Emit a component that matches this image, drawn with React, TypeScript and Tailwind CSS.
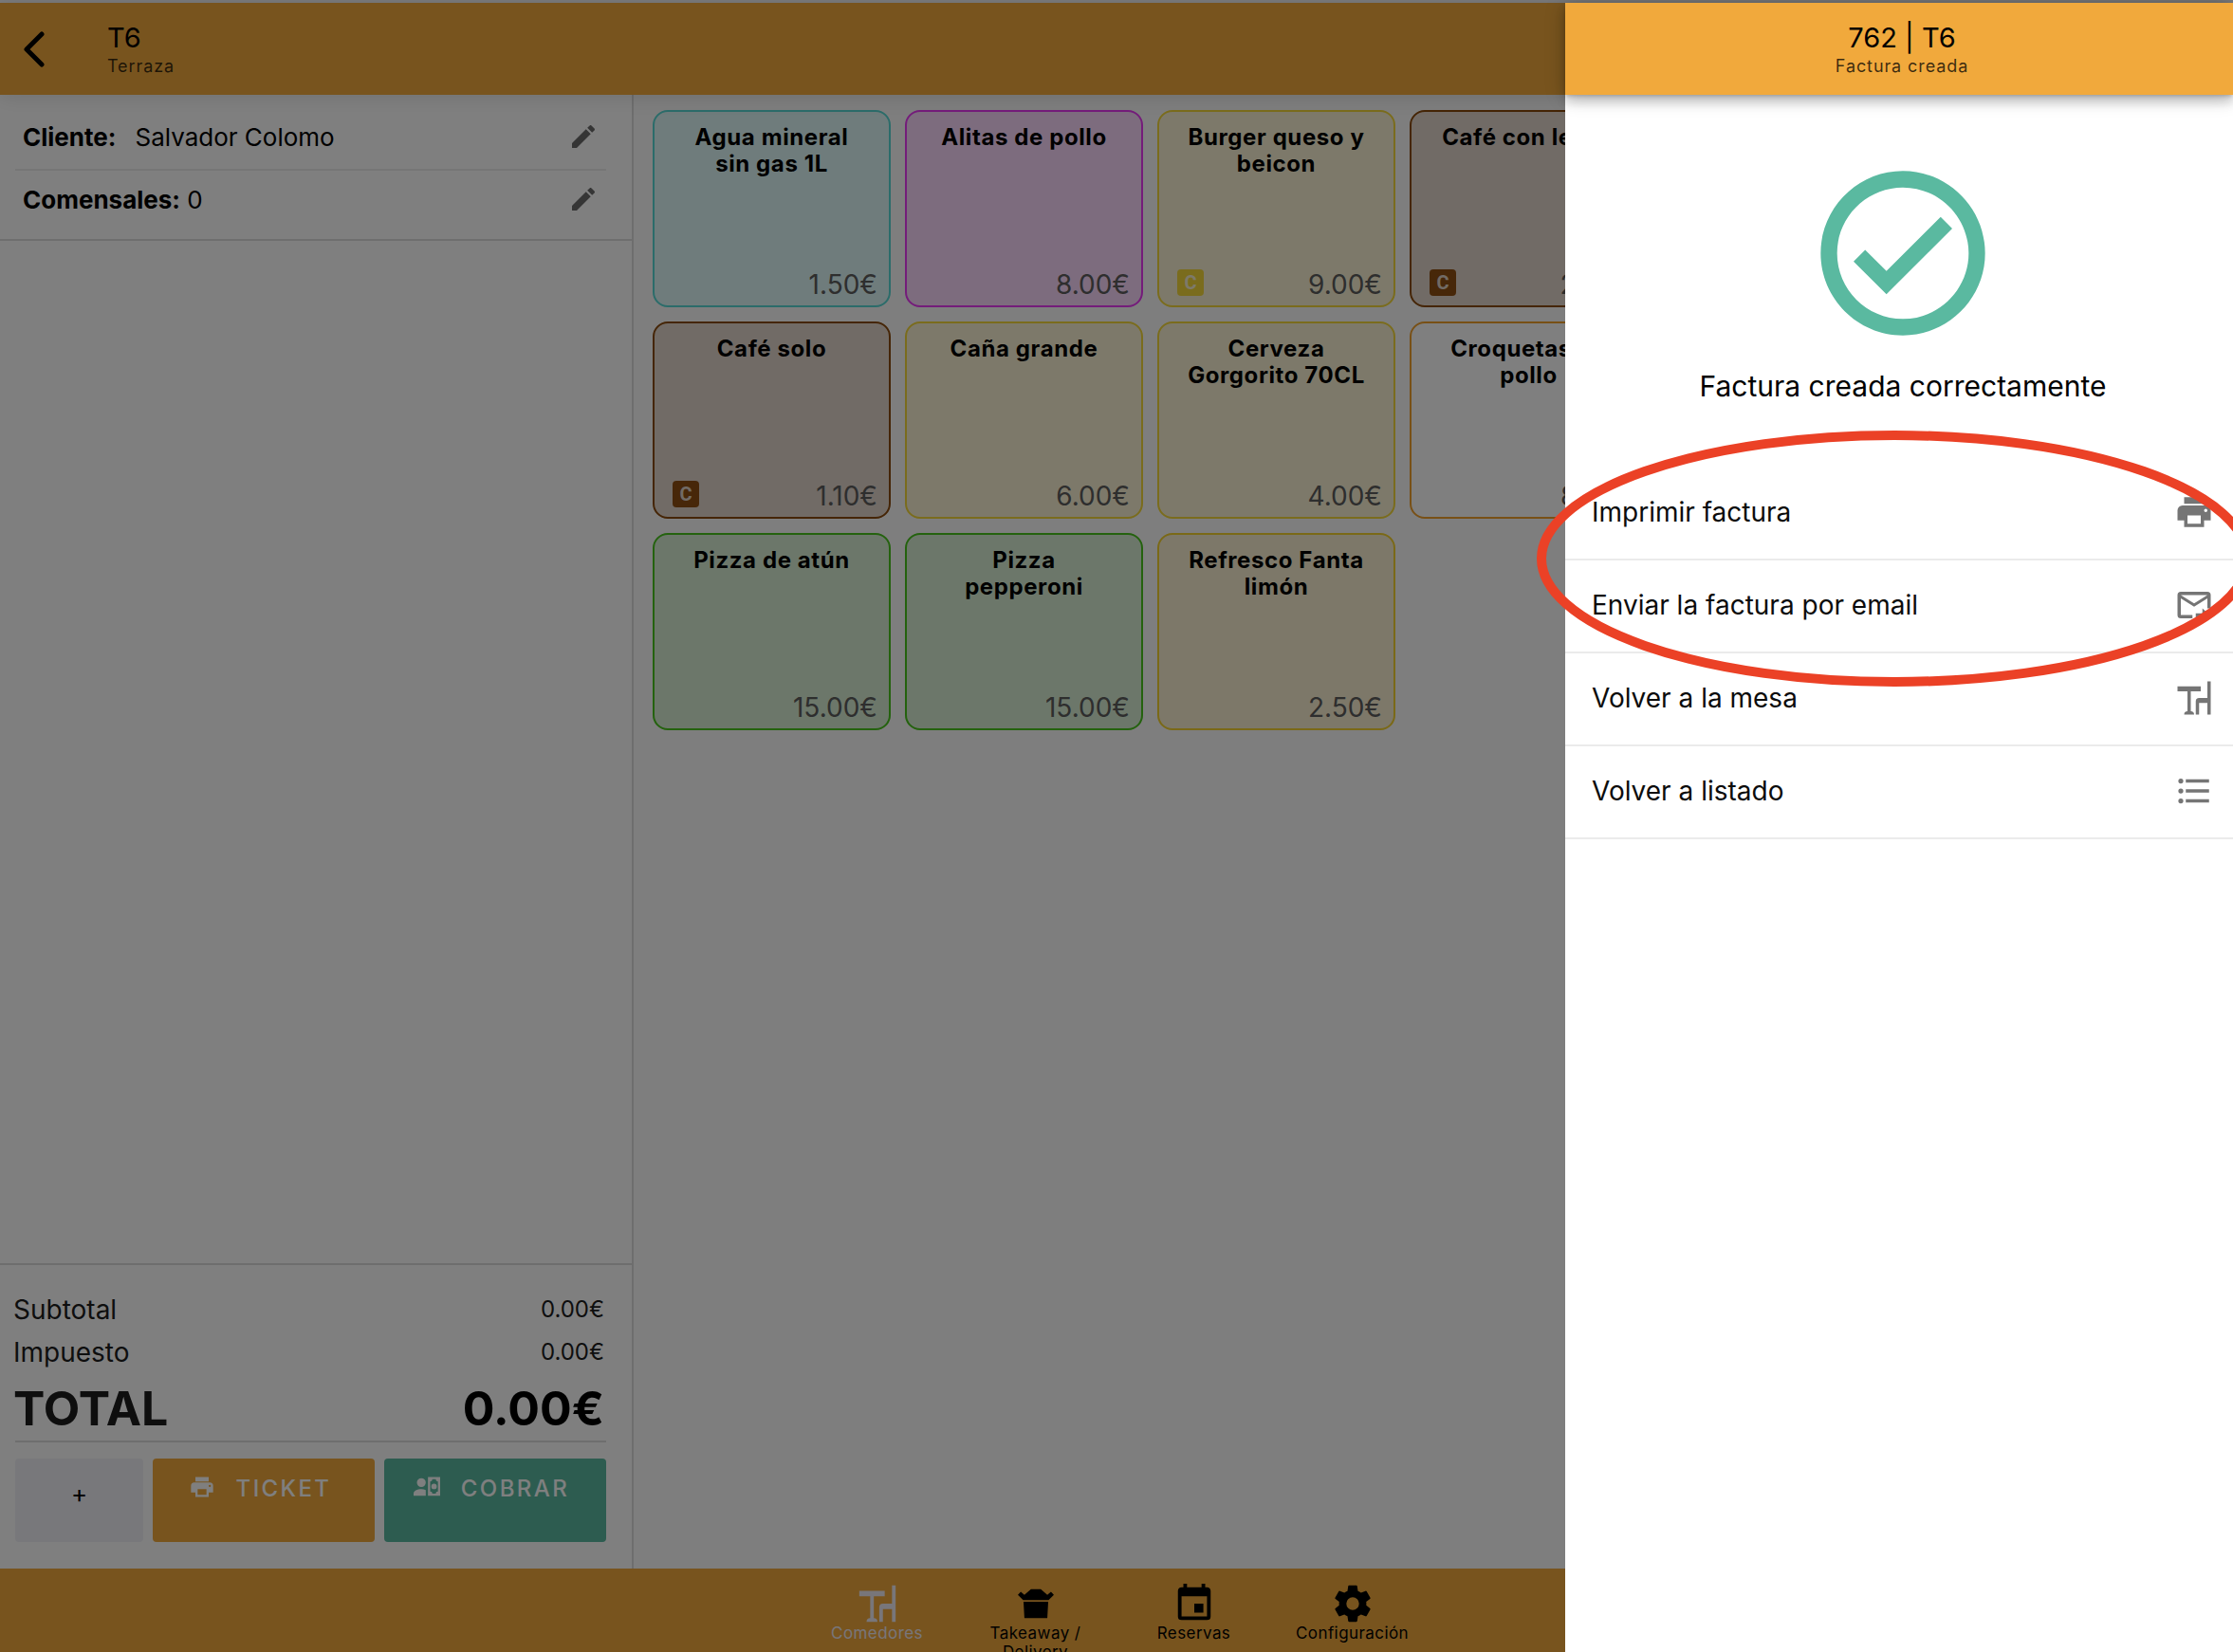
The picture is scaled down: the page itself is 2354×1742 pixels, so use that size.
import React from "react";

const icons = {
  printer:
    "M18,3H6V7H18M19,12A1,1 0 0,1 18,11A1,1 0 0,1 19,10A1,1 0 0,1 20,11A1,1 0 0,1 19,12M16,19H8V14H16M19,8H5A3,3 0 0,0 2,11V17H6V21H18V17H22V11A3,3 0 0,0 19,8Z",
  emailSend:
    "M13 17H17V14L22 18.5L17 23V20H13V17M20 4A2 2 0 0 1 22 6V14H20V8L12 13L4 8V18H11V20H4A2 2 0 0 1 2 18V6A2 2 0 0 1 4 4H20M12 11L20 6H4L12 11Z",
  tableChair:
    "M12 22H6A2 2 0 0 1 8 20V8H2V5H16V8H10V20A2 2 0 0 1 12 22M22 2V22H20V15H15V22H13V14A2 2 0 0 1 15 12H20V2Z",
  list: "M7,5H21V7H7V5M7,13V11H21V13H7M4,4.5A1.5,1.5 0 0,1 5.5,6A1.5,1.5 0 0,1 4,7.5A1.5,1.5 0 0,1 2.5,6A1.5,1.5 0 0,1 4,4.5M4,10.5A1.5,1.5 0 0,1 5.5,12A1.5,1.5 0 0,1 4,13.5A1.5,1.5 0 0,1 2.5,12A1.5,1.5 0 0,1 4,10.5M7,19V17H21V19H7M4,16.5A1.5,1.5 0 0,1 5.5,18A1.5,1.5 0 0,1 4,19.5A1.5,1.5 0 0,1 2.5,18A1.5,1.5 0 0,1 4,16.5Z",
  pencil:
    "M20.71,7.04C21.1,6.65 21.1,6 20.71,5.63L18.37,3.29C18,2.9 17.35,2.9 16.96,3.29L15.12,5.12L18.87,8.87M3,17.25V21H6.75L17.81,9.93L14.06,6.18L3,17.25Z",
  checkCircle:
    "M12 2C6.5 2 2 6.5 2 12S6.5 22 12 22 22 17.5 22 12 17.5 2 12 2M12 20C7.59 20 4 16.41 4 12S7.59 4 12 4 20 7.59 20 12 16.41 20 12 20M16.59 7.58L10 14.17L7.41 11.59L6 13L10 17L18 9L16.59 7.58Z",
  accountCash:
    "M11 8A4 4 0 1 1 3 8A4 4 0 1 1 11 8M11 14.72V20H0V18C0 15.79 3.13 14 7 14C8.5 14 9.87 14.27 11 14.72M24 20H13V3H24V20M16 11.5A2.5 2.5 0 1 0 21 11.5A2.5 2.5 0 1 0 16 11.5M22 7A2 2 0 0 1 20 5H17A2 2 0 0 1 15 7V16A2 2 0 0 1 17 18H20A2 2 0 0 1 22 16V7Z",
  takeaway:
    "M9.3 4H14.7L18.3 7.2L20.3 5.5L21.9 7.2L19 10H5L2.1 7.2L3.7 5.5L5.7 7.2ZM5.2 11H18.8L18.3 20H5.7Z",
  calendar:
    "M19,19H5V8H19M16,1V3H8V1H6V3H5C3.89,3 3,3.89 3,5V19A2,2 0 0,0 5,21H19A2,2 0 0,0 21,19V5C21,3.89 20.1,3 19,3H18V1M17,12H12V17H17V12Z",
  cog: "M12,15.5A3.5,3.5 0 0,1 8.5,12A3.5,3.5 0 0,1 12,8.5A3.5,3.5 0 0,1 15.5,12A3.5,3.5 0 0,1 12,15.5M19.43,12.97C19.47,12.65 19.5,12.33 19.5,12C19.5,11.67 19.47,11.34 19.43,11L21.54,9.37C21.73,9.22 21.78,8.95 21.66,8.73L19.66,5.27C19.54,5.05 19.27,4.96 19.05,5.05L16.56,6.05C16.04,5.66 15.5,5.32 14.87,5.07L14.5,2.42C14.46,2.18 14.25,2 14,2H10C9.75,2 9.54,2.18 9.5,2.42L9.13,5.07C8.5,5.32 7.96,5.66 7.44,6.05L4.95,5.05C4.73,4.96 4.46,5.05 4.34,5.27L2.34,8.73C2.21,8.95 2.27,9.22 2.46,9.37L4.57,11C4.53,11.34 4.5,11.67 4.5,12C4.5,12.33 4.53,12.65 4.57,12.97L2.46,14.63C2.27,14.78 2.21,15.05 2.34,15.27L4.34,18.73C4.46,18.95 4.73,19.03 4.95,18.95L7.44,17.94C7.96,18.34 8.5,18.68 9.13,18.93L9.5,21.58C9.54,21.82 9.75,22 10,22H14C14.25,22 14.46,21.82 14.5,21.58L14.87,18.93C15.5,18.67 16.04,18.34 16.56,17.94L19.05,18.95C19.27,19.03 19.54,18.95 19.66,18.73L21.66,15.27C21.78,15.05 21.73,14.78 21.54,14.63L19.43,12.97Z",
};

type IconName = keyof typeof icons;

function Icon({ name, className }: { name: IconName; className: string }) {
  return (
    <svg viewBox="0 0 24 24" className={`shrink-0 ${className}`} fill="currentColor" fillRule="evenodd" aria-hidden="true">
      <path d={icons[name]} />
    </svg>
  );
}

const tones = {
  cyan: { card: "border-[#57d9d4] bg-[#def8f8]", badge: "bg-[#57d9d4] text-[#def8f8]" },
  magenta: { card: "border-[#e838f5] bg-[#fbd8fd]", badge: "bg-[#e838f5] text-[#fbd8fd]" },
  yellow: { card: "border-[#f5d93a] bg-[#fbf3d4]", badge: "bg-[#f5d93a] text-[#fbf3d4]" },
  amber: { card: "border-[#f5d22e] bg-[#fbf0d2]", badge: "bg-[#f5d22e] text-[#fbf0d2]" },
  brown: { card: "border-[#8b4a0c] bg-[#e3d6cc]", badge: "bg-[#8f4f12] text-[#e3d6cc]" },
  green: { card: "border-[#48c41c] bg-[#d9efd5]", badge: "bg-[#48c41c] text-[#d9efd5]" },
  orange: { card: "border-[#f1a02c] bg-white", badge: "bg-[#f1a02c] text-white" },
};

const products: { name: string; price: string; tone: keyof typeof tones; combo?: boolean }[] = [
  { name: "Agua mineral sin gas 1L", price: "1.50€", tone: "cyan" },
  { name: "Alitas de pollo", price: "8.00€", tone: "magenta" },
  { name: "Burger queso y beicon", price: "9.00€", tone: "yellow", combo: true },
  { name: "Café con leche", price: "2.00€", tone: "brown", combo: true },
  { name: "Café solo", price: "1.10€", tone: "brown", combo: true },
  { name: "Caña grande", price: "6.00€", tone: "yellow" },
  { name: "Cerveza Gorgorito 70CL", price: "4.00€", tone: "yellow" },
  { name: "Croquetas de pollo", price: "8.00€", tone: "orange" },
  { name: "Pizza de atún", price: "15.00€", tone: "green" },
  { name: "Pizza pepperoni", price: "15.00€", tone: "green" },
  { name: "Refresco Fanta limón", price: "2.50€", tone: "amber" },
];

const tabs: { label: string; icon: IconName; active?: boolean }[] = [
  { label: "Comedores", icon: "tableChair", active: true },
  { label: "Takeaway / Delivery", icon: "takeaway" },
  { label: "Reservas", icon: "calendar" },
  { label: "Configuración", icon: "cog" },
];

const actions: { label: string; icon: IconName }[] = [
  { label: "Imprimir factura", icon: "printer" },
  { label: "Enviar la factura por email", icon: "emailSend" },
  { label: "Volver a la mesa", icon: "tableChair" },
  { label: "Volver a listado", icon: "list" },
];

function Heading({ title, subtitle }: { title: string; subtitle: string }) {
  return (
    <div>
      <h1 className="text-[29px] leading-9">{title}</h1>
      <p className="text-lg leading-6 tracking-wider text-black/75">{subtitle}</p>
    </div>
  );
}

function OrderPanel() {
  return (
    <section className="flex w-[668px] shrink-0 flex-col border-r-2 border-[#dcdcdc] bg-white">
      <div className="border-b-2 border-[#dcdcdc] pr-[27px] pb-2 pl-4">
        <div className="flex h-20 items-center justify-between border-b-2 border-[#ececec] pt-2.5 pr-2 pl-2 text-[26px]">
          <p>
            <b className="mr-5 font-bold">Cliente:</b>
            <span>Salvador Colomo</span>
          </p>
          <button type="button" aria-label="Editar cliente" className="text-[#6b6b6b]">
            <Icon name="pencil" className="size-8" />
          </button>
        </div>
        <div className="flex h-16 items-center justify-between pr-2 pb-1 pl-2 text-[26px]">
          <p>
            <b className="font-bold">Comensales:</b> <span>0</span>
          </p>
          <button type="button" aria-label="Editar comensales" className="text-[#6b6b6b]">
            <Icon name="pencil" className="size-8" />
          </button>
        </div>
      </div>
      <div className="flex-1" />
      <div className="border-t-2 border-[#dcdcdc] pt-6 pr-[27px] pb-7 pl-4">
        <dl className="-ml-0.5 text-[#1c1c1c]">
          <div className="flex h-[45px] items-center justify-between">
            <dt className="text-[28px]">Subtotal</dt>
            <dd className="pr-0.5 text-2xl">0.00€</dd>
          </div>
          <div className="flex h-[45px] items-center justify-between">
            <dt className="text-[28px]">Impuesto</dt>
            <dd className="pr-0.5 text-2xl">0.00€</dd>
          </div>
          <div className="flex h-[71px] items-center justify-between pt-1 text-[50px] font-bold">
            <dt>TOTAL</dt>
            <dd className="pr-0.5 text-black">0.00€</dd>
          </div>
        </dl>
        <div className="grid grid-cols-[135px_1fr_1fr] gap-[10px] border-t-2 border-[#dcdcdc] pt-[17px]">
          <button type="button" className="h-[88px] rounded bg-[#f0f1f6] pb-4 text-[26px] text-black">
            +
          </button>
          <button
            type="button"
            className="flex h-[88px] items-start justify-center gap-[22px] rounded bg-[#f1a93c] pt-4 pr-2 text-2xl font-medium tracking-widest text-white"
          >
            <Icon name="printer" className="size-7" />
            <span className="leading-8">TICKET</span>
          </button>
          <button
            type="button"
            className="flex h-[88px] items-start justify-center gap-[22px] rounded bg-[#5ab9a0] pt-4 pr-2 text-2xl font-medium tracking-widest text-white"
          >
            <Icon name="accountCash" className="size-7" />
            <span className="leading-8">COBRAR</span>
          </button>
        </div>
      </div>
    </section>
  );
}

function ProductGrid() {
  return (
    <section className="flex-1 bg-[#fcfcfc] pt-4 pl-5">
      <div className="grid grid-cols-[repeat(4,251px)] gap-[15px]">
        {products.map((p) => (
          <button
            type="button"
            key={p.name}
            className={`flex h-52 flex-col rounded-2xl border-2 pt-[13px] pr-3 pb-1.5 pl-[19px] ${tones[p.tone].card}`}
          >
            <span className="mr-4 ml-[9px] self-stretch text-center text-2xl leading-7 font-bold tracking-wide">
              {p.name}
            </span>
            <span className="mt-auto flex items-start justify-between self-stretch">
              {p.combo ? (
                <span
                  className={`flex size-7 items-center justify-center rounded-sm font-[Roboto] text-xl font-bold ${tones[p.tone].badge}`}
                >
                  C
                </span>
              ) : (
                <span />
              )}
              <span className="text-[28px] leading-8 text-[#5c5c5c]">{p.price}</span>
            </span>
          </button>
        ))}
      </div>
    </section>
  );
}

function InvoiceDrawer() {
  return (
    <aside
      role="dialog"
      aria-label="Factura creada"
      className="absolute top-[3px] right-0 bottom-0 w-[704px] bg-white"
    >
      <header className="flex h-[97px] items-center justify-center bg-[#f1a93c] pl-1.5 text-center shadow-[0_2px_4px_-1px_rgba(0,0,0,0.2),0_8px_10px_rgba(0,0,0,0.14),0_2px_20px_rgba(0,0,0,0.24)]">
        <Heading title="762 | T6" subtitle="Factura creada" />
      </header>
      <div className="flex flex-col items-center pt-[63px] pl-2">
        <Icon name="checkCircle" className="size-52 text-[#5ab9a0]" />
        <p className="pt-4 text-[30px] leading-10">Factura creada correctamente</p>
      </div>
      <ul className="pt-[66px]">
        {actions.map((a) => (
          <li key={a.label}>
            <button
              type="button"
              className="flex h-[98px] w-full items-center justify-between border-b-2 border-[#ebebeb] pr-5 pb-0.5 pl-7 text-left text-[28px] text-[#0c0c0c]"
            >
              {a.label}
              <Icon name={a.icon} className="size-[42px] text-[#757575]" />
            </button>
          </li>
        ))}
      </ul>
      <svg
        viewBox="0 0 754 272"
        className="pointer-events-none absolute top-[450px] -left-[30px] h-[272px] w-[754px]"
        fill="none"
        aria-hidden="true"
      >
        <ellipse cx="377" cy="136" rx="372" ry="130" stroke="#eb4126" strokeWidth="10" />
      </svg>
    </aside>
  );
}

export default function App() {
  return (
    <div className="relative flex h-screen flex-col overflow-hidden bg-[#f6f6f8] pt-[3px] font-[Inter,sans-serif] text-black">
      <header className="z-10 flex h-[97px] shrink-0 items-center bg-[#f1a93c] shadow-[0_2px_20px_rgba(0,0,0,0.12)]">
        <button type="button" aria-label="Volver" className="w-[113px] pl-[23px]">
          <svg viewBox="0 0 26 38" className="h-[38px] w-[26px]" fill="none" aria-hidden="true">
            <path d="M21 3L5 19L21 35" stroke="currentColor" strokeWidth="5" strokeLinecap="round" strokeLinejoin="round" />
          </svg>
        </button>
        <Heading title="T6" subtitle="Terraza" />
      </header>
      <main className="flex min-h-0 flex-1">
        <OrderPanel />
        <ProductGrid />
      </main>
      <nav className="flex h-[88px] shrink-0 justify-center bg-[#f1a93c] pr-1">
        {tabs.map((t) => (
          <a
            key={t.label}
            href="#"
            className={`flex w-[167px] flex-col items-center px-5 pt-3.5 text-center text-[17px] leading-5 tracking-wide ${
              t.active ? "text-[#f0ecf4]" : "text-black"
            }`}
          >
            <Icon name={t.icon} className="size-[46px]" />
            <span className="-mt-0.5">{t.label}</span>
          </a>
        ))}
      </nav>
      <div className="absolute inset-0 z-20 bg-black/50">
        <InvoiceDrawer />
      </div>
    </div>
  );
}
